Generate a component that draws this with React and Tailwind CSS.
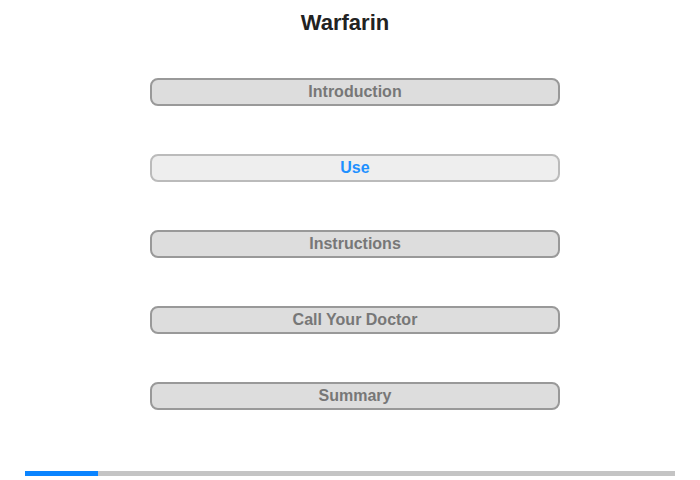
export default function App() {
  const items = [
    { label: "Introduction", active: false },
    { label: "Use", active: true },
    { label: "Instructions", active: false },
    { label: "Call Your Doctor", active: false },
    { label: "Summary", active: false },
  ];
  return (
    <div
      className="w-[700px] h-[480px] bg-white relative overflow-hidden"
      style={{ fontFamily: '"Liberation Sans", Arial, sans-serif' }}
    >
      <div className="pt-[10px] pr-[10px] text-center text-[22px] leading-[25px] font-bold text-[#222]">
        Warfarin
      </div>
      <div className="mt-[43px] pl-[150px] flex flex-col gap-[48px]">
        {items.map((it) => (
          <div
            key={it.label}
            className={
              it.active
                ? "w-[410px] h-[28px] rounded-[8px] border-2 border-[#bbbbbb] bg-[#eeeeee] flex items-center justify-center text-[16px] font-bold text-[#1e90ff]"
                : "w-[410px] h-[28px] rounded-[8px] border-2 border-[#999999] bg-[#dddddd] flex items-center justify-center text-[16px] font-bold text-[#777777]"
            }
          >
            {it.label}
          </div>
        ))}
      </div>
      <div className="mt-[61px] ml-[25px] w-[650px] h-[5px] bg-[#c4c4c4] flex">
        <div className="w-[73px] h-full bg-[#0a84ff]"></div>
      </div>
    </div>
  );
}
